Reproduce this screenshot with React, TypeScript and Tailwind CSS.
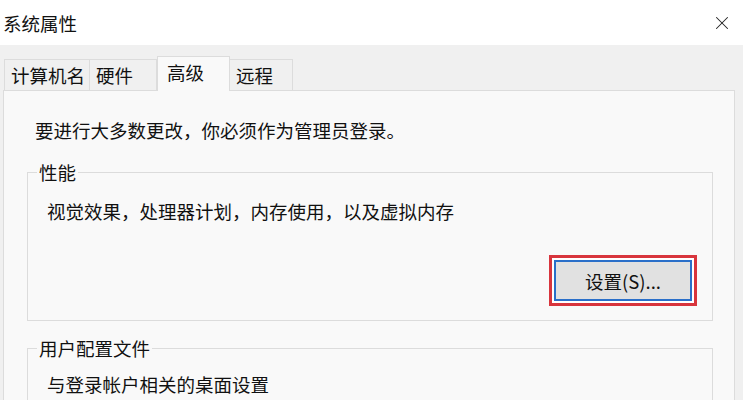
import { X } from "lucide-react";

const TABS = [
  { label: "计算机名", w: "w-[86px]", active: false },
  { label: "硬件", w: "w-[67px]", active: false },
  { label: "高级", w: "w-[73px]", active: true },
  { label: "远程", w: "w-[63px]", active: false },
];

function GroupBox({ title, children, className }: { title: string; children: React.ReactNode; className?: string }) {
  return (
    <fieldset className={`ml-[23px] mr-[21px] border border-[#dcdcdc] ${className ?? ""}`}>
      <legend className="-ml-[10px] px-[2px] leading-[24px]">{title}</legend>
      {children}
    </fieldset>
  );
}

export default function App() {
  return (
    <div
      className="h-[400px] w-[743px] overflow-hidden bg-[#f0f0f0] text-[18.5px] text-[#111]"
      style={{ fontFamily: '"Noto Sans CJK SC", "Liberation Sans", sans-serif' }}
    >
      {/* title bar */}
      <div className="flex h-[45px] items-center justify-between bg-white pl-[3px] pr-[10px]">
        <span className="leading-[24px]">系统属性</span>
        <X size={22} strokeWidth={1.1} className="text-[#222]" />
      </div>

      {/* tabs */}
      <div className="mt-[14px] flex h-[31px] items-end pl-[4px]">
        {TABS.map((t) =>
          t.active ? (
            <div
              key={t.label}
              className={`${t.w} relative z-10 -mb-px flex h-[35px] items-center border border-b-0 border-[#dcdcdc] bg-[#f9f9f9] pb-[2px] pl-[9px]`}
            >
              {t.label}
            </div>
          ) : (
            <div
              key={t.label}
              className={`${t.w} flex h-[31px] items-center border border-b-0 border-l-0 border-[#dcdcdc] bg-[#f0f0f0] pl-[6px] pt-[2px] first:border-l`}
            >
              {t.label}
            </div>
          )
        )}
      </div>

      {/* panel */}
      <div className="ml-[3px] mr-[8px] h-[320px] border border-[#dcdcdc] bg-[#f9f9f9]">
        <p className="pl-[31px] pt-[27px] leading-[24px]">要进行大多数更改，你必须作为管理员登录。</p>

        <GroupBox title="性能" className="mt-[18px] pb-[14px] pl-[19px] pr-[15px]">
          <p className="mt-[15px] leading-[24px]">视觉效果，处理器计划，内存使用，以及虚拟内存</p>
          <div className="mt-[32px] flex justify-end">
            <div className="border-[3px] border-[#d8353d] bg-white p-[2px]">
              <button className="flex h-[41px] w-[138px] items-center justify-center border-2 border-[#2a6fc9] bg-[#e1e1e1] leading-[24px]">
                设置(S)...
              </button>
            </div>
          </div>
        </GroupBox>

        <GroupBox title="用户配置文件" className="mt-[15px] h-[80px] pl-[19px]">
          <p className="mt-[12px] leading-[24px]">与登录帐户相关的桌面设置</p>
        </GroupBox>
      </div>
    </div>
  );
}
